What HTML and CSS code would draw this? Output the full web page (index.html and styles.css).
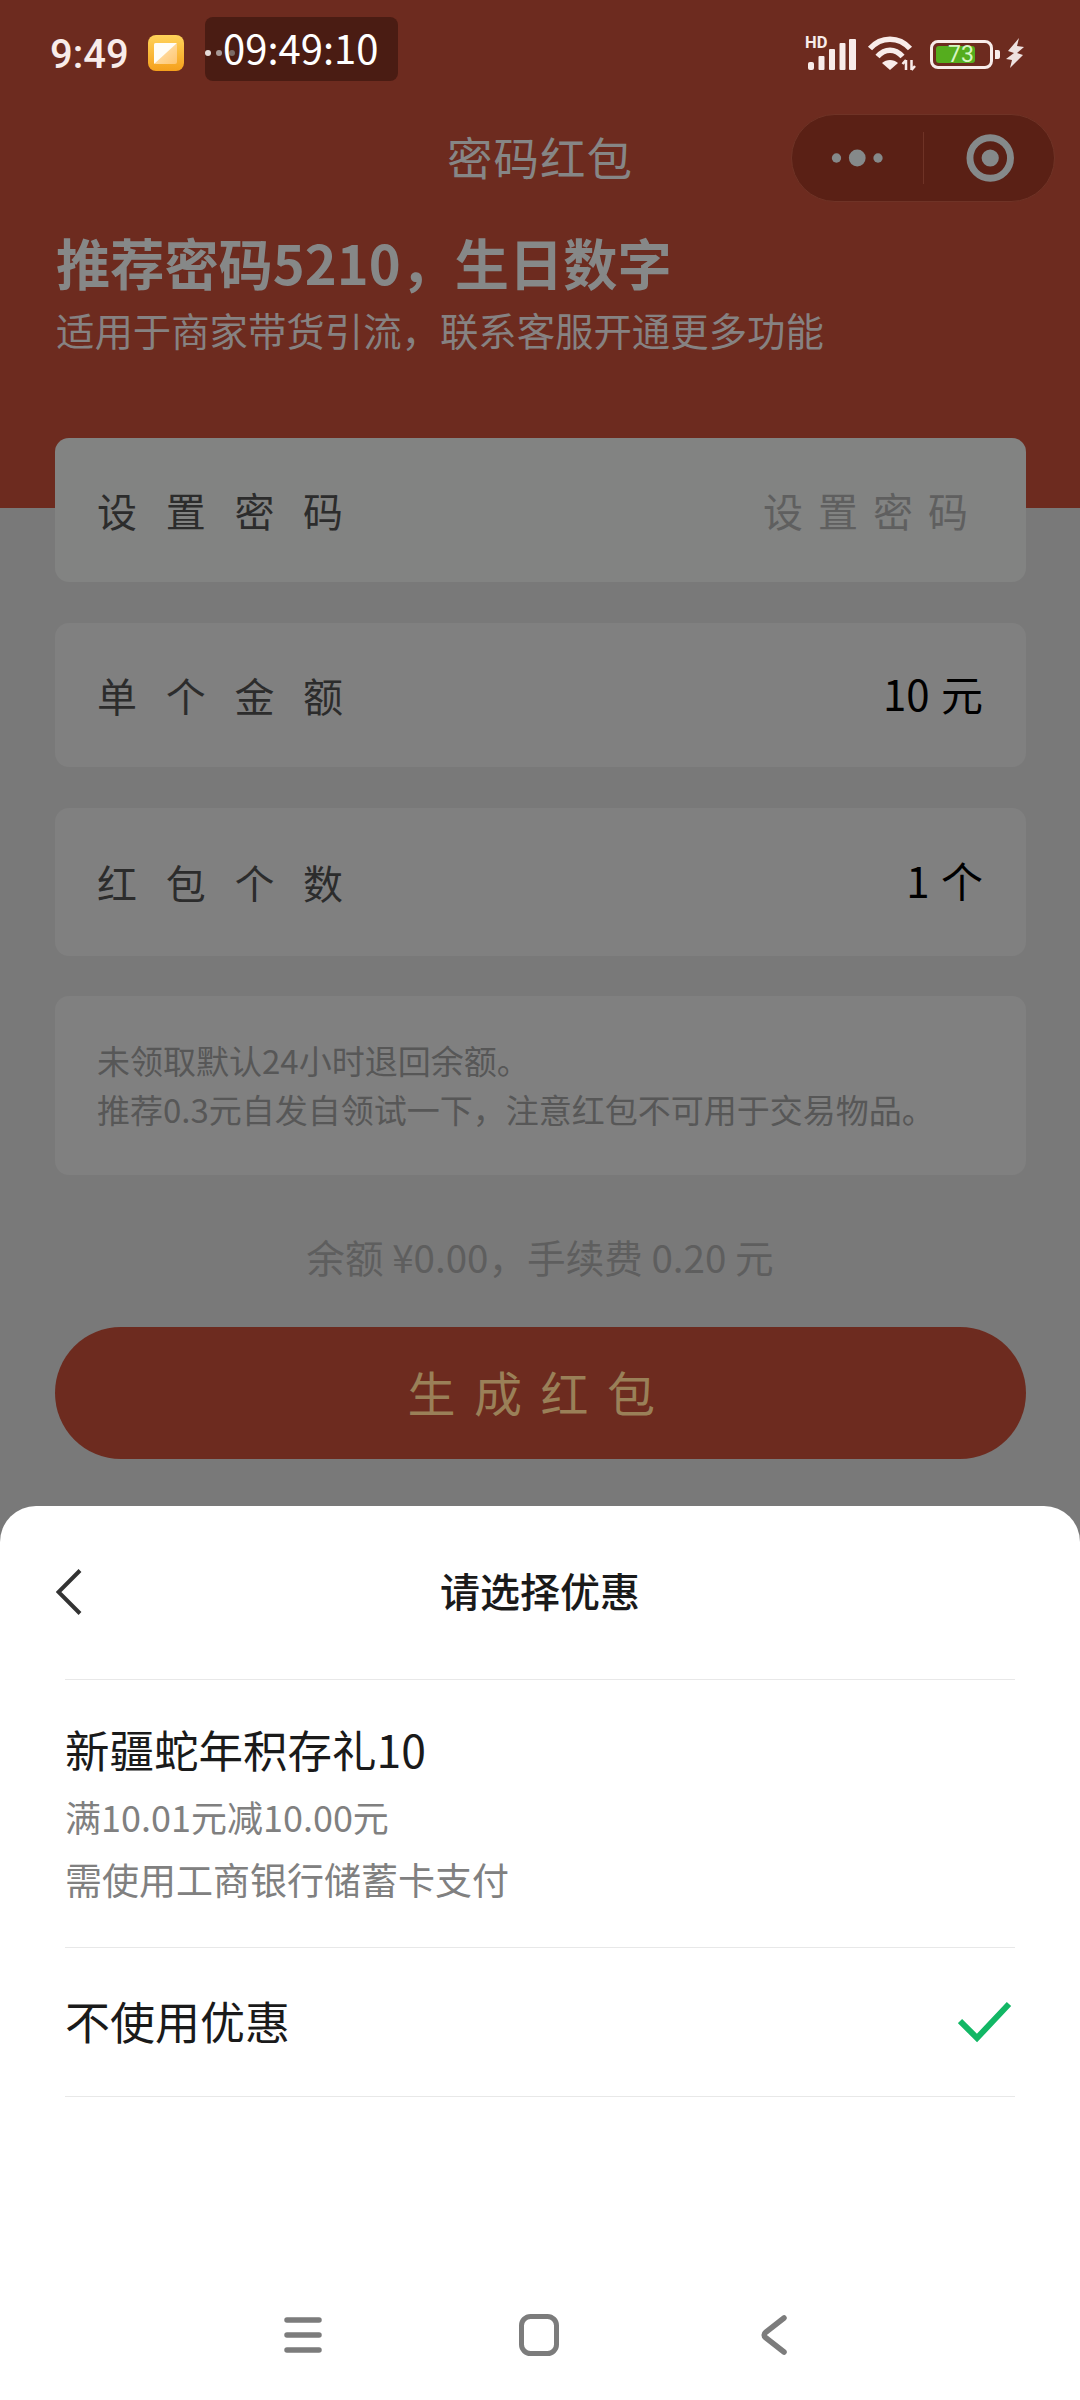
FILE: index.html
```html
<!DOCTYPE html>
<html lang="zh-CN">
<head>
<meta charset="utf-8">
<title>密码红包</title>
<link rel="stylesheet" href="styles.css">
</head>
<body>
<div class="screen">
  <div class="status">
    <div class="status-left">
      <span class="clock">9:49</span>
      <svg class="app-icon" width="36" height="36" viewBox="0 0 36 36">
        <defs>
          <linearGradient id="ag" x1="0" y1="0" x2="0" y2="1"><stop offset="0" stop-color="#ffd35a"/><stop offset="1" stop-color="#f5a01c"/></linearGradient>
          <linearGradient id="bg" x1="0" y1="0" x2="1" y2="1"><stop offset="0" stop-color="#ffe9bf"/><stop offset="1" stop-color="#ffc56e"/></linearGradient>
        </defs>
        <rect width="36" height="36" rx="8" fill="url(#ag)"/>
        <rect x="6" y="8" width="23" height="21" rx="2" fill="url(#bg)"/>
        <path d="M6 29V10a2 2 0 0 1 2-2h21z" fill="#fffdf6"/>
      </svg>
      <div class="timer">
        <svg class="timer-dots" width="32" height="8" viewBox="0 0 32 8"><circle cx="3" cy="4" r="3" fill="#e6dcd9"/><circle cx="14" cy="4" r="3" fill="#a89a97"/><circle cx="27" cy="4" r="3" fill="#7b6a66"/></svg>
        <span class="timer-text">09:49:10</span>
      </div>
    </div>
    <div class="status-right">
      <svg width="52" height="40" viewBox="0 0 52 40" class="signal">
        <text x="0" y="17" class="hd">HD</text>
        <g fill="#f8ecea">
          <rect x="3" y="31" width="6" height="8" rx="2"/>
          <rect x="13.500" y="25" width="6" height="14" rx="1"/>
          <rect x="24" y="18" width="6" height="21" rx="1"/>
          <rect x="34.500" y="12" width="6" height="27" rx="1"/>
          <rect x="44" y="8" width="7" height="31" rx="1"/>
        </g>
      </svg>
      <svg width="50" height="36" viewBox="0 0 50 36" class="wifi">
        <g fill="none" stroke="#f8ecea" stroke-width="5.500">
          <path d="M3 13.500C14 1 32 1 43 13.500"/>
          <path d="M10.500 21.500C18 13 28 13 35.500 21.500"/>
        </g>
        <path d="M23 35l-8-7c4.500-4 11.500-4 16 0z" fill="#f8ecea"/>
        <path d="M39 25v10M35.500 29l3.500-4M44.500 25v10M44.500 35l3.500-4" fill="none" stroke="#f8ecea" stroke-width="2.500"/>
      </svg>
      <div class="battery">
        <div class="cell">
          <div class="fill"></div>
          <span class="level">73</span>
        </div>
        <div class="nub"></div>
      </div>
      <svg width="18" height="30" viewBox="0 0 18 30" class="bolt"><path d="M13 0L2 13l6 2-8 6 6 1-2 8 13-13-6-2 7-6-7-1z" fill="#eee2e0"/></svg>
    </div>
  </div>

  <div class="navbar">
    <div></div>
    <div class="nav-title">密码红包</div>
    <div class="capsule">
      <svg width="132" height="86" viewBox="0 0 132 86"><g fill="#85898a"><circle cx="45" cy="43" r="4.700"/><circle cx="66" cy="43" r="8.500"/><circle cx="87" cy="43" r="4.700"/></g></svg>
      <div class="capsule-line"></div>
      <svg width="132" height="86" viewBox="0 0 132 86"><circle cx="68" cy="43" r="20.500" fill="none" stroke="#85898a" stroke-width="7"/><circle cx="68" cy="43" r="8.700" fill="#85898a"/></svg>
    </div>
  </div>

  <div class="intro">
    <h1 class="headline">推荐密码5210，生日数字</h1>
    <p class="subline">适用于商家带货引流，联系客服开通更多功能</p>
  </div>

  <div class="form">
    <div class="card row-a">
      <span class="label">设置密码</span>
      <span class="placeholder">设置密码</span>
    </div>
    <div class="card row-b">
      <span class="label">单个金额</span>
      <span class="value">10 元</span>
    </div>
    <div class="card row-c">
      <span class="label">红包个数</span>
      <span class="value">1 个</span>
    </div>
    <div class="card note">
      <p>未领取默认24小时退回余额。</p>
      <p>推荐0.3元自发自领试一下，注意红包不可用于交易物品。</p>
    </div>
  </div>

  <div class="balance">余额 ¥0.00，手续费 0.20 元</div>
  <div class="submit">生成红包</div>

  <div class="sheet">
    <div class="sheet-head">
      <svg class="sheet-back" width="26" height="46" viewBox="0 0 26 46"><path d="M24 1.500L2.500 23 24 44.500" fill="none" stroke="#333" stroke-width="4"/></svg>
      <div class="sheet-title">请选择优惠</div>
      <div></div>
    </div>
    <div class="coupon">
      <div class="coupon-name">新疆蛇年积存礼10</div>
      <div class="coupon-desc rule">满10.01元减10.00元</div>
      <div class="coupon-desc bank">需使用工商银行储蓄卡支付</div>
    </div>
    <div class="no-coupon">
      <div class="coupon-name wide">不使用优惠</div>
      <svg width="54" height="42" viewBox="0 0 54 42"><path d="M2 20l17 17L51 3" fill="none" stroke="#12b765" stroke-width="6"/></svg>
    </div>
  </div>

  <div class="sysnav">
    <svg width="38" height="36" viewBox="0 0 38 36"><g stroke="#7c7c7c" stroke-width="5.500" stroke-linecap="round"><path d="M3 3h32M3 18h32M3 33h32"/></g></svg>
    <svg class="nav-home" width="40" height="42" viewBox="0 0 40 42"><rect x="2.500" y="2.500" width="35" height="37" rx="9" fill="none" stroke="#7c7c7c" stroke-width="5"/></svg>
    <svg class="nav-back" width="26" height="40" viewBox="0 0 26 40"><path d="M23 3L4.500 17.500a3 3 0 0 0 0 5L23 37" fill="none" stroke="#7c7c7c" stroke-width="5.500" stroke-linecap="round"/></svg>
  </div>
</div>
</body>
</html>
```

FILE: styles.css
```css
* { box-sizing: border-box; }
html, body { margin: 0; padding: 0; }
body { font-family: "Noto Sans CJK SC", "Noto Sans", sans-serif; }
h1, p { margin: 0; font-weight: inherit; }

.screen {
  position: relative;
  width: 1080px;
  height: 2400px;
  overflow: hidden;
  display: flex;
  flex-direction: column;
  background: linear-gradient(#6d2b1f 508px, #797979 508px);
}

/* status bar */
.status {
  display: flex;
  justify-content: space-between;
  align-items: center;
  height: 64px;
  margin-top: 17px;
  padding: 0 56px 0 50px;
}
.status-left { display: flex; align-items: center; }
.clock { font: 500 40px/64px Roboto, sans-serif; color: #f8ecea; width: 98px; margin-top: 12px; }
.app-icon { display: block; margin-top: 8px; }
.timer {
  position: relative;
  width: 193px;
  height: 64px;
  margin-left: 21px;
  padding-left: 18px;
  background: #4a1c13;
  border-radius: 8px;
  font-size: 40px;
  line-height: 60px;
  color: #fff;
}
.timer-dots { position: absolute; left: 0; top: 32px; }
.timer-text { position: relative; }
.status-right { display: flex; align-items: center; margin-top: 8px; }
.signal { display: block; margin-right: 10px; margin-bottom: 4px; }
.hd { font: 700 16.500px Roboto, sans-serif; fill: #f8ecea; }
.wifi { display: block; margin-right: 13px; }
.battery { display: flex; align-items: center; gap: 2px; margin-right: 6px; margin-top: 2px; }
.cell {
  position: relative;
  width: 63px;
  height: 29px;
  padding: 3px;
  border: 3px solid #f8ecea;
  border-radius: 8px;
}
.fill { width: 39px; height: 100%; background: #55ad1e; border-radius: 3px; }
.level {
  position: absolute;
  left: 15px;
  top: 0;
  font: 400 23px/23px Roboto, sans-serif;
  color: #d8f5c4;
}
.nub { width: 5px; height: 9px; background: #f8ecea; border-radius: 0 2px 2px 0; }
.bolt { display: block; }

/* nav */
.navbar {
  display: grid;
  grid-template-columns: 1fr auto 1fr;
  align-items: center;
  height: 88px;
  margin-top: 33px;
  padding-right: 25px;
}
.nav-title { font-size: 45.500px; line-height: 85px; letter-spacing: 1px; color: #868686; margin-left: 25px; align-self: start; }
.capsule {
  justify-self: end;
  display: flex;
  align-items: center;
  width: 264px;
  height: 88px;
  background: #5a2015;
  border: 1px solid #6f3326;
  border-radius: 44px;
}
.capsule-line { width: 1px; height: 52px; background: #6f3326; }

/* intro */
.intro { padding-left: 56px; margin-top: 28px; }
.headline { font-size: 54.200px; font-weight: 700; line-height: 64px; color: #868888; }
.subline { font-size: 38.400px; line-height: 46px; margin-top: 12px; color: #868282; }

/* form */
.form { display: flex; flex-direction: column; gap: 41px; margin-top: 86px; padding: 0 54px 0 55px; }
.card {
  display: flex;
  justify-content: space-between;
  align-items: center;
  padding: 0 43px 0 42px;
  background: #808080;
  border-radius: 14px;
}
.row-a { height: 144px; background: #828382; }
.row-b { height: 144px; }
.row-c { height: 148px; margin-bottom: -1px; }
.label { font-size: 40px; letter-spacing: 28.700px; color: #2c2c2c; margin-right: -28.700px; }
.placeholder { font-size: 40px; letter-spacing: 15px; color: #5f5f5f; }
.value { font-size: 42px; word-spacing: 2px; color: #000; padding-bottom: 6px; }
.note {
  display: block;
  height: 179px;
  padding-top: 40px;
  font-size: 33px;
  line-height: 49px;
  color: #575757;
}

.balance { margin-top: 56px; font-size: 38.600px; line-height: 50px; text-align: center; color: #5e5e5e; }
.submit {
  height: 132px;
  margin: 46px 54px 0 55px;
  background: #6d2b1f;
  border-radius: 66px;
  font-size: 48px;
  line-height: 128px;
  letter-spacing: 18.500px;
  text-align: center;
  color: #9a8058;
}

/* sheet */
.sheet {
  flex: 1;
  margin-top: 47px;
  padding: 0 65px;
  background: #fff;
  border-radius: 36px 36px 0 0;
}
.sheet-head {
  display: grid;
  grid-template-columns: 1fr auto 1fr;
  align-items: center;
  height: 174px;
  border-bottom: 1px solid #e8e8e8;
}
.sheet-back { display: block; margin-left: -9px; margin-bottom: 2px; }
.sheet-title { font-size: 40px; font-weight: 500; line-height: 169px; color: #1a1a1a; align-self: start; }
.coupon { height: 268px; padding-top: 38px; border-bottom: 1px solid #e8e8e8; }
.coupon-name { font-size: 44.500px; line-height: 62px; color: #1a1a1a; }
.coupon-name.wide { font-size: 45px; padding-bottom: 3px; }
.coupon-desc { font-size: 37px; line-height: 62px; color: #808080; }
.coupon-desc.rule { font-size: 36px; margin-top: 5px; }
.coupon-desc.bank { margin-top: 1px; }
.no-coupon {
  display: flex;
  justify-content: space-between;
  align-items: center;
  height: 149px;
  padding-right: 3px;
  border-bottom: 1px solid #e8e8e8;
}

/* system nav */
.sysnav {
  position: absolute;
  top: 2314px;
  left: 284px;
  height: 42px;
  display: flex;
  align-items: center;
}
.nav-home { margin-left: 197px; }
.nav-back { margin-left: 202px; }
```
